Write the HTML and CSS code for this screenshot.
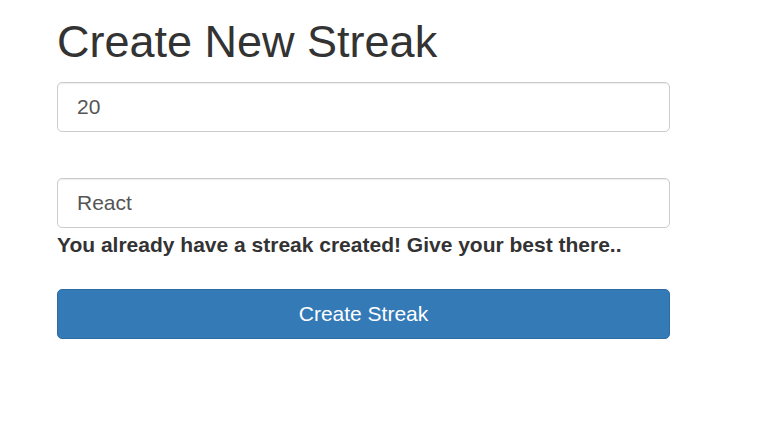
FILE: index.html
```html
<!DOCTYPE html>
<html lang="en">
<head>
<meta charset="utf-8">
<title>Create New Streak</title>
<link rel="stylesheet" href="styles.css">
</head>
<body>
<div class="container">
  <h1 class="title">Create New Streak</h1>
  <form class="streak-form">
    <input class="field field-days" type="text" value="20">
    <input class="field field-name" type="text" value="React">
    <p class="message">You already have a streak created! Give your best there..</p>
    <button class="btn-primary" type="button">Create Streak</button>
  </form>
</div>
</body>
</html>
```

FILE: styles.css
```css
* { box-sizing: border-box; }
html, body {
  margin: 0;
  padding: 0;
  background: #fff;
}
body {
  font-family: "Liberation Sans", Arial, sans-serif;
  color: #333;
}
.container {
  width: 670px;
  padding-left: 57px;
}
.title {
  margin: 17px 0 0;
  font-size: 45px;
  font-weight: 400;
  line-height: 1.1;
  color: #333;
}
.streak-form {
  display: flex;
  flex-direction: column;
  margin-top: 15.5px;
}
.field {
  display: block;
  width: 100%;
  height: 50px;
  padding: 10px 19px;
  font-family: "Liberation Sans", Arial, sans-serif;
  font-size: 21px;
  line-height: 28px;
  color: #555;
  background: #fff;
  border: 1px solid #ccc;
  border-radius: 5px;
  box-shadow: inset 0 1px 1px rgba(0,0,0,.075);
  outline: none;
}
.field-name {
  margin-top: 46px;
}
.message {
  margin: 4px 0 0;
  font-size: 21px;
  font-weight: 700;
  line-height: 26px;
  color: #333;
}
.btn-primary {
  margin-top: 30.5px;
  width: 100%;
  height: 50px;
  font-family: "Liberation Sans", Arial, sans-serif;
  font-size: 21px;
  color: #fff;
  background: #337ab7;
  border: 1px solid #2e6da4;
  border-radius: 5px;
  cursor: pointer;
}
```
